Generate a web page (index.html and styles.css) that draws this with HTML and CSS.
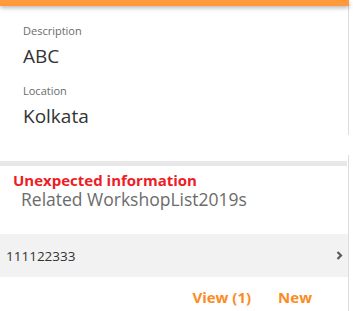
FILE: index.html
```html
<!DOCTYPE html>
<html lang="en">
<head>
  <meta charset="UTF-8">
  <title>Workshop</title>
  <link rel="stylesheet" href="styles.css">
</head>
<body>

  <div class="topbar"></div>

  <section class="details">
    <div class="field">
      <div class="field-label">Description</div>
      <div class="field-value">ABC</div>
    </div>
    <div class="field">
      <div class="field-label">Location</div>
      <div class="field-value">Kolkata</div>
    </div>
  </section>

  <section class="related">
    <div class="divider"></div>
    <div class="related-head">
      <div class="error">Unexpected information</div>
      <div class="related-title">Related WorkshopList2019s</div>
    </div>
    <div class="list-row">
      <span>111122333</span>
      <svg class="chevron" width="7" height="9" viewBox="0 0 7 9">
        <path d="M1.5 1 L5 4.5 L1.5 8" fill="none" stroke="#5a5a5a" stroke-width="2.2"/>
      </svg>
    </div>
    <div class="actions">
      <a href="#">View (1)</a>
      <a href="#">New</a>
    </div>
  </section>

</body>
</html>
```

FILE: styles.css
```css
body {
  margin: 0;
  font-family: "Open Sans", "DejaVu Sans", sans-serif;
  background: #fff;
  color: #333;
}
.topbar {
  position: relative;
  width: 349px;
  height: 6px;
  background: #ff9a3c;
  box-shadow: 0 2px 4px rgba(0, 0, 0, 0.28);
}
.details {
  width: 349px;
  box-sizing: border-box;
  border-right: 1px solid #dcdcdc;
  padding: 17px 0 7px 23px;
}
.field + .field {
  margin-top: 15px;
}
.field-label {
  font-size: 11px;
  line-height: 15px;
  color: #6b6b6b;
}
.field-value {
  margin-top: 6px;
  font-size: 19px;
  line-height: 24px;
  color: #333;
}
.related {
  width: 349px;
  box-sizing: border-box;
  margin-top: 20px;
  padding-top: 6px;
  border-right: 1px solid #dcdcdc;
}
.divider {
  height: 5px;
  margin-right: 1px;
  background: #e8e8e8;
}
.related-head {
  height: 68px;
  box-sizing: border-box;
  padding: 6px 0 0 13px;
}
.error {
  font-size: 15px;
  line-height: 16px;
  font-weight: bold;
  color: #ee1c25;
}
.related-title {
  padding-left: 8px;
  margin-top: 1px;
  font-size: 17.5px;
  line-height: 20px;
  color: #6b6b6b;
}
.list-row {
  display: flex;
  align-items: center;
  justify-content: space-between;
  height: 43px;
  padding: 0 5px 0 6px;
  background: #f2f2f2;
  font-size: 13.5px;
  color: #333;
}
.actions {
  display: flex;
  justify-content: flex-end;
  gap: 27px;
  height: 34px;
  box-sizing: border-box;
  padding: 10px 36px 0 0;
}
.actions a {
  font-size: 15px;
  line-height: 20px;
  font-weight: bold;
  color: #fd8b1f;
  text-decoration: none;
}
```
